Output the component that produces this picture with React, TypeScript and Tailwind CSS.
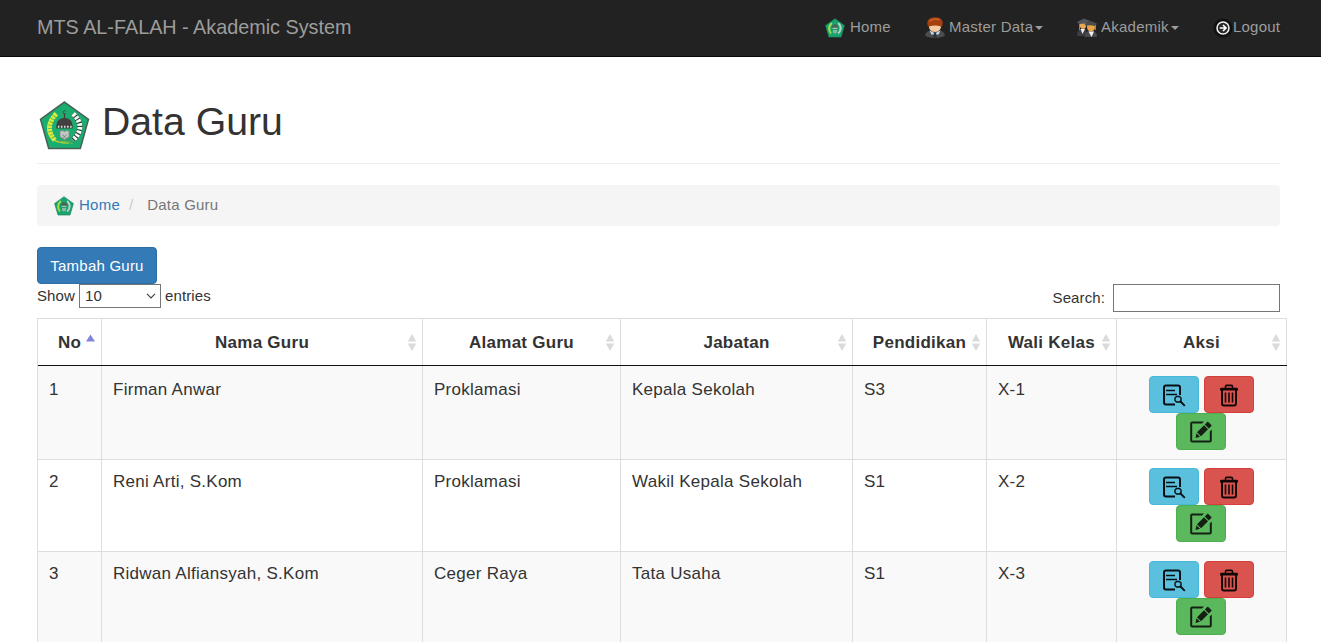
import React from "react";

function Crest({ className }: { className: string }) {
  return (
    <svg viewBox="0 0 50 50" className={className}>
      <path d="M25 2 48.500 19 40.500 47.500H9.500L1.500 19Z" fill="#19ad70" stroke="#4a6158" strokeWidth="1.500" />
      <path d="M16 13Q3 26 12 37.500Q17 42 29 42.500" fill="none" stroke="#b7d83d" strokeWidth="1" />
      <path d="M17 13.500Q4.500 26 15.500 39.500" fill="none" stroke="#dcea3c" strokeWidth="4.600" strokeDasharray="2.600 .7" />
      <path d="M33.500 13.500Q47 27 33 39.500" fill="none" stroke="#263f36" strokeWidth="5.200" />
      <path d="M33.500 13.500Q47 27 33 39.500" fill="none" stroke="#f7f9f7" strokeWidth="4.800" strokeDasharray="2.600 1.100" />
      <path d="M25 13v6" stroke="#3f403d" strokeWidth="1.100" />
      <path d="M26.300 11a1.700 1.700 0 1 0 0 2.600" fill="none" stroke="#59422e" strokeWidth=".9" />
      <path d="M17 25Q17.500 18 25 17.500 32.500 18 33 25V28H17Z" fill="#42403e" />
      <path d="M18.500 26.300h13.500" stroke="#d9dfda" strokeWidth="2" strokeDasharray="1.500 1.500" />
      <path d="M20.500 30.500Q23 29 25 31Q27 29 29.500 30.500V36L25 39 20.500 36Z" fill="#c1c7c3" stroke="#777f79" strokeWidth=".7" />
      <path d="m21 40 6-6M29 40l-6-6" fill="none" stroke="#777f79" strokeWidth=".9" />
      <path d="M18 42q7-3 15 1" fill="none" stroke="#8bb83b" strokeWidth="1" />
    </svg>
  );
}

function SmallCrest({ className }: { className: string }) {
  return (
    <svg viewBox="0 0 20 20" className={className}>
      <path d="M10 .7 19.400 7.500 16 19H4L.6 7.500Z" fill="#17a46d" stroke="#208a63" strokeWidth=".7" />
      <path d="M6.800 5Q1.800 10 6 15.500" fill="none" stroke="#a8dc48" strokeWidth="1.900" />
      <path d="M13.200 5Q18.200 10 13.200 15.500" fill="none" stroke="#b9d4c6" strokeWidth="1.900" />
      <path d="M6.800 9.500Q7 6.300 10 6.300T13.200 9.500V11H6.800Z" fill="#45685a" />
      <path d="M7.500 10.300h5" stroke="#c2ddd1" />
      <path d="M8 12h4v2.500l-2 1.300-2-1.300Z" fill="#8fb6a4" />
    </svg>
  );
}

function Person() {
  return (
    <svg viewBox="0 0 20 21" className="h-[21px] w-5">
      <path d="M0 18.500Q1 14 6 13.500h8Q19 14 20 18.500 17 20.800 10 20.800T0 18.500Z" fill="#4c4d50" />
      <path d="m4.500 13.500 5.500 3 5.500-3-2 4h-7Z" fill="#c8e2f5" />
      <path d="m9 16-1 4.500h4L11 16Z" fill="#2e3338" />
      <path d="M3.800 7h12.400Q16.500 15 10 15T3.800 7Z" fill="#f5c9a0" />
      <path d="M2.500 8Q1.200 .3 10 .3 18.800.3 17.500 8 17.300 9.500 16 9.500 10 7.500 4 9.500 2.700 9.500 2.500 8Z" fill="#a5400e" />
      <path d="M4.500 4.500Q8 .8 14.500 2.500" fill="none" stroke="#cd6430" strokeWidth="1.500" />
    </svg>
  );
}

function Graduates() {
  return (
    <svg viewBox="0 0 20 20" className="h-5 w-5">
      <path d="M0 17Q0 12 4 10.500h5V18H1Z" fill="#3b3d40" />
      <path d="M2.500 4.500h7Q10 11 6 11T2.500 4.500Z" fill="#e9a855" />
      <path d="m0 4 7-3.500L13.500 3 9 5.500l-7 .5Z" fill="#50565c" />
      <path d="M3.500 11h4.500l-2.500 5Z" fill="#e9edf1" />
      <path d="M7.500 19q0-5 4-6h5q3.500 1 3.500 6Z" fill="#47494d" />
      <path d="M10 6.500h8q.5 7-4 7T10 6.500Z" fill="#eca248" />
      <path d="m7.500 6 6.500-3 6 2.500-1.500 3q-5-2-9.500-.5Z" fill="#4a4d50" />
      <path d="M11.500 13.500h5.500L14.500 19Z" fill="#f0f1f2" />
      <path d="M2.500 6v6M18.500 7v5" stroke="#ac814f" />
    </svg>
  );
}

function LogoutIcon() {
  return (
    <svg viewBox="0 0 20 20" className="h-5 w-5">
      <circle cx="10" cy="10" r="9.500" fill="#111" />
      <circle cx="10" cy="10" r="6" fill="#282828" stroke="#f2f2f2" strokeWidth="1.500" />
      <path d="M6.700 10h6M10 7l3 3-3 3" fill="none" stroke="#fff" strokeWidth="1.700" />
    </svg>
  );
}

function Caret() {
  return <svg viewBox="0 0 8 4" className="ml-[2px] mt-px h-1 w-2"><path d="M0 0h8L4 4Z" fill="#9d9d9d" /></svg>;
}

function DetailIcon() {
  return (
    <svg viewBox="0 0 24 24" className="h-6 w-6" fill="none" stroke="#080f12">
      <path d="M13 21.500H4Q2 21.500 2 19.500V4.500Q2 2.500 4 2.500H16Q18 2.500 18 4.500V12" strokeWidth="2" />
      <path d="M4 7.500h9M4 11.500h11" strokeWidth="1.500" />
      <path d="M14.500 13.500h3l1.500 1.500v2.500L17.500 19h-3L13 17.500V15Z" strokeWidth="1.400" />
      <path d="m18 18 4.800 4.800" strokeWidth="1.900" />
    </svg>
  );
}

function TrashIcon() {
  return (
    <svg viewBox="0 0 24 24" className="h-6 w-6" fill="none" stroke="#120707">
      <path d="M3 7.500V6Q3 4.700 4.500 4.700h15Q21 4.700 21 6v1.500Z" fill="#120707" stroke="none" />
      <path d="M8.500 5V3.500Q8.500 2.400 9.600 2.400h4.800Q15.500 2.400 15.500 3.500V5" strokeWidth="1.600" />
      <path d="M5 7v13.500q0 2 2 2h10q2 0 2-2V7" strokeWidth="2" />
      <path d="M8.500 9.500v10M12 9.500v10M15.500 9.500v10" strokeWidth="1.600" />
    </svg>
  );
}

function EditIcon() {
  return (
    <svg viewBox="0 0 24 24" className="h-6 w-6" fill="#142014">
      <path d="M15 1.500H3.200Q1.200 1.500 1.200 3.500V20.500Q1.200 22.500 3.200 22.500H20.800Q22.800 22.500 22.800 20.500V9.500L20.800 11.500V20.500H3.200V3.500H13Z" />
      <path d="m18.800 1.500 4 4L19.800 8.500l-4-4ZM15 5.300l4 4-7 7-4-4ZM7.500 13.300l3.500 3.500-4.500 1.200Z" />
    </svg>
  );
}

function Sorter({ active }: { active?: boolean }) {
  if (active) return <svg viewBox="0 0 10 8" className="absolute right-[6px] top-[15px] h-2 w-[9px]"><path d="M5 0 10 8H0Z" fill="#8285dc" /></svg>;
  return (
    <svg viewBox="0 0 10 18" className="absolute right-[5px] top-[15px] h-[17px] w-[10px]">
      <path d="M5 0 9.500 8H.5ZM.5 10h9L5 18Z" fill="#dbdbdb" />
    </svg>
  );
}

const columns = ["No", "Nama Guru", "Alamat Guru", "Jabatan", "Pendidikan", "Wali Kelas", "Aksi"];
const teachers = [
  ["1", "Firman Anwar", "Proklamasi", "Kepala Sekolah", "S3", "X-1"],
  ["2", "Reni Arti, S.Kom", "Proklamasi", "Wakil Kepala Sekolah", "S1", "X-2"],
  ["3", "Ridwan Alfiansyah, S.Kom", "Ceger Raya", "Tata Usaha", "S1", "X-3"],
];

const actionButton = "flex h-[37px] w-[50px] items-center justify-center rounded-[4px] border";

export default function App() {
  return (
    <div className="h-[642px] w-full overflow-hidden bg-white font-['Liberation_Sans',Arial,sans-serif] text-[15px] leading-[22px] tracking-[0.11px] text-[#333]">
      <header className="flex h-[57px] items-center border-b border-[#080808] bg-[#222] pl-[37px] text-[#9d9d9d]">
        <a href="#" className="w-[788px] whitespace-nowrap pb-[2px] text-[19.800px] tracking-normal">MTS AL-FALAH - Akademic System</a>
        <nav className="flex items-center pb-[1px]">
          <a href="#" className="flex w-[100px] items-center"><SmallCrest className="h-5 w-5" /><span className="ml-[5px] pb-[2px] tracking-[0.2px]">Home</span></a>
          <a href="#" className="flex w-[152px] items-center whitespace-nowrap"><Person /><span className="ml-[4px] pb-[2px] tracking-[0.24px]">Master Data</span><Caret /></a>
          <a href="#" className="flex w-[136px] items-center"><Graduates /><span className="ml-[4px] pb-[2px] tracking-[0.24px]">Akademik</span><Caret /></a>
          <a href="#" className="flex items-center"><LogoutIcon /><span className="pb-[2px] tracking-[0.2px]">Logout</span></a>
        </nav>
      </header>
      <main className="px-[37px] pt-[39px]">
        <div className="mr-1 flex h-[68px] border-b border-[#eee]">
          <Crest className="ml-[2px] mt-1 h-[51px] w-[51px]" />
          <h1 className="ml-3 mt-1 text-[39.200px] leading-[44px] tracking-normal">Data Guru</h1>
        </div>
        <nav className="mr-1 mt-[21px] flex h-[41px] items-center rounded-[4px] bg-[#f5f5f5] pl-[17px] text-[#777]">
          <SmallCrest className="h-5 w-5" />
          <a href="#" className="ml-[5px] pb-[2px] tracking-[0.25px] text-[#337ab7]">Home</a>
          <span className="ml-[9px] pb-[2px] text-[#ccc]">/</span>
          <span className="ml-[14px] pb-[2px] tracking-[0.2px]">Data Guru</span>
        </nav>
        <button className="mt-[21px] flex h-[37px] w-[120px] items-center justify-center rounded-[4px] border border-[#2e6da4] bg-[#337ab7] tracking-[0.23px] text-white">Tambah Guru</button>
        <div className="mr-1 flex h-[34px] items-start justify-between">
          <div className="flex h-6 items-center">
            <span className="w-[38px]">Show</span>
            <button className="ml-1 mr-1 flex h-6 w-[82px] items-center justify-between border border-[#767676] bg-white pl-[5px] pr-1">
              10
              <svg viewBox="0 0 10 6" className="h-[6px] w-[10px]" fill="none" stroke="#444"><path d="m1 .8 4 4 4-4" strokeWidth="1.200" /></svg>
            </button>
            <span>entries</span>
          </div>
          <label className="flex h-7 items-center">Search:<input className="ml-2 h-7 w-[167px] border border-[#767676] px-2 outline-none" /></label>
        </div>
        <div className="w-[1250px] border-l border-t border-[#ddd] text-[17px] leading-[25px] tracking-[0.27px]">
          <div className="grid grid-cols-[64px_321px_198px_232px_134px_130px_170px] border-b border-[#111] font-bold">
            {columns.map((name, i) => (
              <div key={name} className="relative flex h-[46px] items-center justify-center border-r border-[#ddd]">
                <span className="pt-px">{name}</span><Sorter active={i === 0} />
              </div>
            ))}
          </div>
          {teachers.map((teacher, row) => (
            <div key={teacher[0]} className={`grid grid-cols-[64px_321px_198px_232px_134px_130px_170px] border-b border-[#ddd] ${row % 2 === 0 ? "bg-[#f9f9f9]" : "bg-white"} ${row === 0 ? "h-[94px]" : "h-[92px]"}`}>
              {teacher.map((value, i) => (
                <div key={i} className={`border-r border-[#ddd] pl-[11px] ${row === 0 ? "pt-[11px]" : "pt-[9px]"}`}>{value}</div>
              ))}
              <div className={`flex flex-wrap content-start justify-center gap-x-[5px] border-r border-[#ddd] pr-px ${row === 0 ? "pt-[10px]" : row === 2 ? "pt-[9px]" : "pt-[8px]"}`}>
                <button aria-label="Detail" className={`${actionButton} border-[#46b8da] bg-[#5bc0de]`}><DetailIcon /></button>
                <button aria-label="Hapus" className={`${actionButton} border-[#d43f3a] bg-[#d9534f]`}><TrashIcon /></button>
                <span className="w-full" />
                <button aria-label="Ubah" className={`${actionButton} border-[#4cae4c] bg-[#5cb85c]`}><EditIcon /></button>
              </div>
            </div>
          ))}
        </div>
      </main>
    </div>
  );
}
